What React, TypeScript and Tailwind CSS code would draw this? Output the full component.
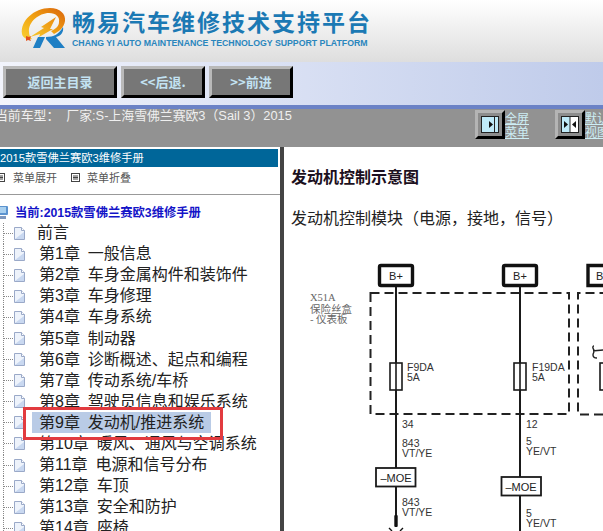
import React from "react";

const chapters = [
  "第1章 一般信息",
  "第2章 车身金属构件和装饰件",
  "第3章 车身修理",
  "第4章 车身系统",
  "第5章 制动器",
  "第6章 诊断概述、起点和编程",
  "第7章 传动系统/车桥",
  "第8章 驾驶员信息和娱乐系统",
  "第9章 发动机/推进系统",
  "第10章 暖风、通风与空调系统",
  "第11章 电源和信号分布",
  "第12章 车顶",
  "第13章 安全和防护",
  "第14章 座椅",
];

function Logo() {
  return (
    <svg width="48" height="44" viewBox="0 0 48 44" className="shrink-0">
      <defs>
        <linearGradient id="ring" x1="0" y1="1" x2="1" y2="0">
          <stop offset="0" stopColor="#f9d030" />
          <stop offset="0.5" stopColor="#f0a012" />
          <stop offset="1" stopColor="#d9640c" />
        </linearGradient>
        <linearGradient id="bolt" x1="0" y1="1" x2="1" y2="0">
          <stop offset="0" stopColor="#f7c92a" />
          <stop offset="1" stopColor="#ea8a10" />
        </linearGradient>
      </defs>
      <path d="M3 27C1 14 15 1 31 1c10 0 16 6 15 13-1 6-5 10-11 13l-3-3c5-2 8-5 8-9 1-5-3-9-10-9C20 6 9 15 10 25c0 3 1 5 3 7C8 33 4 31 3 27Z" fill="url(#ring)" />
      <path d="M11 30 25 21l-3-1 15-10-6 12 3 0-14 8 1-3Z" fill="url(#bolt)" />
      <path d="M7 29l3 1 2-1-1 3 1 2-3-1-2 1 0-3Z" fill="#e4501c" />
      <path d="M14 41l5-11h7l-5 11Z" fill="#1f7fc4" />
      <path d="M27 30c8 0 13-3 17-10 1 5-2 9-7 10l9 11H35l-8-9Z" fill="#1f7fc4" />
    </svg>
  );
}

function BevelButton({ children, className }: { children: React.ReactNode; className: string }) {
  return (
    <div
      className={`flex items-center justify-center pb-px h-[32px] bg-[#777777] border-[3px] border-t-[#b9b9b9] border-l-[#b9b9b9] border-r-black border-b-black text-[13px] font-bold text-[#c3e2f2] font-['Noto_Sans_CJK_SC',sans-serif] ${className}`}
    >
      {children}
    </div>
  );
}

function SmallBevel({ double }: { double?: boolean }) {
  return (
    <div className="w-[30px] h-[29px] mt-px bg-[#8c8c8c] border-[3px] border-t-[#b4b4b4] border-l-[#b4b4b4] border-r-black border-b-black flex items-center justify-center shrink-0">
      <svg width="18" height="17" viewBox="0 0 18 17">
        <rect x="0.5" y="0.5" width="17" height="16" fill={double ? "#ffffff" : "#bfeaf8"} stroke="#222" />
        {double ? (
          <>
            <rect x="1" y="1" width="8" height="15" fill="#bfeaf8" />
            <line x1="9" y1="1" x2="9" y2="16" stroke="#222" />
            <path d="M3 5l4 3.5-4 3.5Z" fill="#111" />
            <path d="M15 5l-4 3.5 4 3.5Z" fill="#111" />
          </>
        ) : (
          <>
            <line x1="13.5" y1="1" x2="13.5" y2="16" stroke="#222" />
            <path d="M8 5l4 3.5-4 3.5Z" fill="#111" />
          </>
        )}
      </svg>
    </div>
  );
}

function ListGlyph({ cut }: { cut?: boolean }) {
  return (
    <svg width={cut ? 5 : 9} height="9" viewBox={cut ? "4 0 5 9" : "0 0 9 9"} className="shrink-0">
      <rect x="0.5" y="0.5" width="8" height="8" fill="#fff" stroke="#444" />
      <path d="M2 3h5M2 4.5h5M2 6h5" stroke="#444" />
    </svg>
  );
}

function FileIcon() {
  return (
    <svg width="13" height="15" viewBox="0 0 13 15" className="shrink-0">
      <path d="M1.5 1.5h7l3 3v9h-10Z" fill="#eef3fb" stroke="#9aa9c8" />
      <path d="M8.5 1.5v3h3" fill="#fff" stroke="#9aa9c8" />
      <path d="M2 13h9V6Z" fill="#c9d8f0" />
    </svg>
  );
}

function TreeRow({ label, selected, first }: { label: string; selected?: boolean; first?: boolean }) {
  return (
    <div className="h-[21.1px] flex items-center shrink-0">
      <div className="ml-[3px] h-full border-l border-dotted border-[#888] w-[10px] flex items-center">
        <div className="w-full border-t border-dotted border-[#888]" />
      </div>
      <FileIcon />
      <span
        className={`${first ? "ml-[11px]" : "ml-[6px] px-[7px]"} h-[21px] flex items-center whitespace-pre text-[16px] leading-none text-[#222] [word-spacing:3.5px] ${selected ? "bg-[#b9cbe6]" : ""}`}
      >
        {label}
      </span>
    </div>
  );
}

function Diagram() {
  const label = "font-['Liberation_Sans',sans-serif] text-[10.5px] fill-[#333]";
  const big = "font-['Liberation_Sans',sans-serif] text-[11px] fill-[#222]";
  const cn = "font-['Noto_Sans_CJK_SC',sans-serif] text-[10.5px] fill-[#666]";
  return (
    <svg width="319" height="305" viewBox="284 226 319 305" className="block">
      <text x="310" y="301" className="font-['Liberation_Serif',serif] text-[10.5px] fill-[#666]">X51A</text>
      <text x="310" y="313" className={cn}>保险丝盒</text>
      <text x="310" y="323" className={cn}>- 仪表板</text>

      <rect x="370.5" y="293" width="198.5" height="121" fill="none" stroke="#222" strokeWidth="2" strokeDasharray="9 5" />
      <path d="M603 414.5H578V293H603" fill="none" stroke="#222" strokeWidth="2" strokeDasharray="9 5" />

      {[396, 520].map((x, i) => (
        <g key={x}>
          <rect x={x - 16.5} y="265.5" width="33" height="20" rx="1.5" fill="#fff" stroke="#111" strokeWidth="3.4" />
          <text x={x} y="280" textAnchor="middle" className={big}>B+</text>
          <line x1={x} y1="287" x2={x} y2={i === 0 ? 468 : 531} stroke="#1a1a1a" strokeWidth="2" />
          <rect x={x - 6} y="363" width="12" height="27" fill="#fff" stroke="#1a1a1a" strokeWidth="1.6" />
          <line x1={x} y1="363" x2={x} y2="390" stroke="#1a1a1a" strokeWidth="1.6" />
        </g>
      ))}
      <path d="M603 265.5H588V285.5H603" fill="none" stroke="#111" strokeWidth="3.4" />
      <text x="596" y="280" className={big}>B</text>
      <path d="M594 346c-2 0-1 3 0 4s-1 3-1 5c0 3 3 3 4 3m-4-7c3 0 6-1 10-1" fill="none" stroke="#222" strokeWidth="1.4" />
      <rect x="600" y="363" width="8" height="27" fill="#fff" stroke="#1a1a1a" strokeWidth="1.6" />

      <text x="407" y="371" className={label}>F9DA</text>
      <text x="407" y="381" className={label}>5A</text>
      <text x="532" y="371" className={label}>F19DA</text>
      <text x="532" y="381" className={label}>5A</text>

      <text x="402" y="428" className={label}>34</text>
      <text x="402" y="447" className={label}>843</text>
      <text x="402" y="457" className={label}>VT/YE</text>
      <text x="526" y="428" className={label}>12</text>
      <text x="526" y="445" className={label}>5</text>
      <text x="526" y="455" className={label}>YE/VT</text>

      <rect x="376" y="468" width="39.5" height="18.5" fill="#fff" stroke="#1a1a1a" strokeWidth="1.8" />
      <text x="396" y="481.5" textAnchor="middle" className={big}>–MOE</text>
      <line x1="396" y1="487" x2="396" y2="517" stroke="#1a1a1a" strokeWidth="2" />
      <rect x="394.3" y="515" width="3.4" height="12" rx="1" fill="#111" />
      <path d="M389 528l3 3M403 528l-3 3" stroke="#111" strokeWidth="1.4" />

      <rect x="501.5" y="477" width="39.5" height="18.5" fill="#fff" stroke="#1a1a1a" strokeWidth="1.8" />
      <text x="521" y="490.5" textAnchor="middle" className={big}>–MOE</text>

      <text x="402" y="506" className={label}>843</text>
      <text x="402" y="516" className={label}>VT/YE</text>
      <text x="526" y="517" className={label}>5</text>
      <text x="526" y="527" className={label}>YE/VT</text>
    </svg>
  );
}

export default function App() {
  return (
    <div className="w-[603px] h-[531px] overflow-hidden flex flex-col bg-white relative font-['Liberation_Sans','Noto_Sans_CJK_SC',sans-serif]">
      {/* brand */}
      <header className="h-[62px] shrink-0 flex items-start pl-[19px] pt-[7px] bg-gradient-to-b from-[#ffffff] to-[#dedede]">
        <Logo />
        <div className="ml-[5px] flex flex-col">
          <div className="mt-px text-[23px] leading-[27px] font-bold tracking-[2px] text-[#1b79b4] whitespace-nowrap font-['Noto_Sans_CJK_SC',sans-serif]">
            畅易汽车维修技术支持平台
          </div>
          <div className="text-[8.75px] leading-[11px] mt-[3px] font-bold text-[#2a86bd] whitespace-nowrap">
            CHANG YI AUTO MAINTENANCE TECHNOLOGY SUPPORT PLATFORM
          </div>
        </div>
      </header>

      {/* toolbar */}
      <nav className="h-[43px] shrink-0 flex items-start gap-[4px] pl-[3px] pt-[4px] bg-gradient-to-r from-[#f2f4fc] to-[#bfcbea]">
        <BevelButton className="w-[114px]">返回主目录</BevelButton>
        <BevelButton className="w-[84px]">&lt;&lt;后退.</BevelButton>
        <BevelButton className="w-[84px]">&gt;&gt;前进</BevelButton>
      </nav>

      {/* car info bar */}
      <div className="h-[42px] shrink-0 bg-[#929292] border-t-[4px] border-[#6b82c6] flex items-start overflow-hidden">
        <div className="ml-[-5px] mt-[-1px] w-[480px] shrink-0 text-[12.85px] leading-[16px] text-[#efefef] whitespace-pre">
          当前车型：  厂家:S-上海雪佛兰赛欧3（Sail 3）2015
        </div>
        <SmallBevel />
        <div className="w-[50px] shrink-0 text-[12px] leading-[14px] underline text-[#cdeef5] pt-[2px] font-['Noto_Sans_CJK_SC',sans-serif]">
          全屏<br />菜单
        </div>
        <SmallBevel double />
        <div className="shrink-0 text-[12px] leading-[14px] underline text-[#cdeef5] whitespace-nowrap pt-[2px] font-['Noto_Sans_CJK_SC',sans-serif]">
          默认<br />视图
        </div>
      </div>

      <div className="flex-1 flex min-h-0">
        {/* left tree */}
        <aside className="w-[280px] shrink-0 pt-[2px] flex flex-col overflow-hidden">
          <div className="w-[278px] h-[18px] shrink-0 bg-[#006699] text-white text-[11.25px] leading-[18px] whitespace-nowrap">
            2015款雪佛兰赛欧3维修手册
          </div>
          <div className="h-[28px] shrink-0 pb-[6px] border-b border-[#999] flex items-center text-[11px] text-[#555] font-['Noto_Sans_CJK_SC',sans-serif]">
            <ListGlyph cut />
            <span className="ml-[8px] w-[58px]">菜单展开</span>
            <ListGlyph />
            <span className="ml-[7px]">菜单折叠</span>
          </div>
          <div className="h-[27.5px] shrink-0 pt-[8px] flex items-center">
            <svg width="9" height="15" viewBox="0 0 9 15" className="shrink-0">
              <rect x="-4" y="1" width="12" height="9" rx="1" fill="#5b93cf" />
              <rect x="-3" y="2" width="9" height="6" fill="#a9d0ef" />
              <rect x="-4" y="11" width="10" height="3" fill="#7d97bd" />
            </svg>
            <span className="ml-[6px] text-[12.3px] font-bold text-[#1414c8] whitespace-nowrap">当前:2015款雪佛兰赛欧3维修手册</span>
          </div>
          <div className="flex flex-col">
            <TreeRow label="前言" first />
            {chapters.map((c) => (
              <TreeRow key={c} label={c} selected={c.startsWith("第9章")} />
            ))}
          </div>
        </aside>

        {/* divider */}
        <div className="w-[4px] shrink-0 bg-[#444444]" />

        {/* content */}
        <main className="flex-1 min-w-0 overflow-hidden">
          <div className="pl-[7px] font-['Noto_Sans_CJK_SC',sans-serif]">
            <h1 className="pt-[20px] text-[16px] leading-[18px] font-bold text-[#1c1020]">发动机控制示意图</h1>
            <p className="mt-[23px] text-[16px] leading-[18px] text-[#222] whitespace-nowrap">发动机控制模块（电源，接地，信号）</p>
          </div>
          <Diagram />
        </main>
      </div>

      {/* red annotation */}
      <div className="absolute left-[23px] top-[407px] w-[200px] h-[33px] border-[3.5px] border-[#e23b3f]" />
    </div>
  );
}
